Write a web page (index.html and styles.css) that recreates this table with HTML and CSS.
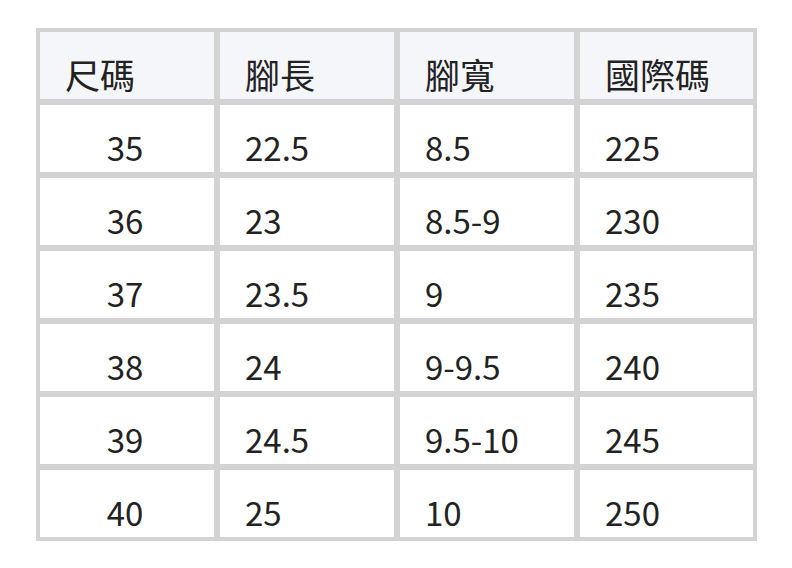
FILE: index.html
```html
<!DOCTYPE html>
<html lang="zh-Hant">
<head>
<meta charset="utf-8">
<link rel="stylesheet" href="styles.css">
</head>
<body>
<div class="size-table">
  <div class="cell head first">尺碼</div>
  <div class="cell head">腳長</div>
  <div class="cell head">腳寬</div>
  <div class="cell head">國際碼</div>

  <div class="cell first">35</div><div class="cell">22.5</div><div class="cell">8.5</div><div class="cell">225</div>
  <div class="cell first">36</div><div class="cell">23</div><div class="cell">8.5-9</div><div class="cell">230</div>
  <div class="cell first">37</div><div class="cell">23.5</div><div class="cell">9</div><div class="cell">235</div>
  <div class="cell first">38</div><div class="cell">24</div><div class="cell">9-9.5</div><div class="cell">240</div>
  <div class="cell first">39</div><div class="cell">24.5</div><div class="cell">9.5-10</div><div class="cell">245</div>
  <div class="cell first">40</div><div class="cell">25</div><div class="cell">10</div><div class="cell">250</div>
</div>
</body>
</html>
```
FILE: styles.css
```css
html, body {
  margin: 0;
  padding: 0;
  background: #ffffff;
}
body {
  padding: 28px 0 0 36px;
  font-family: "Noto Sans CJK TC", "Noto Sans CJK SC", sans-serif;
  font-weight: 400;
  color: #222222;
}
.size-table {
  width: 721px;
  box-sizing: border-box;
  display: grid;
  grid-template-columns: 174px 174px 174px 173px;
  grid-auto-rows: 67px;
  gap: 6px;
  padding: 4px;
  background: #d3d3d3;
}
.cell {
  background: #ffffff;
  font-size: 33px;
  line-height: 46px;
  padding: 0 10px 2px 25px;
  display: flex;
  align-items: flex-end;
}
.cell.head {
  background: #f5f6fa;
  font-size: 35px;
  padding-bottom: 2px;
}
.cell.first:not(.head) {
  justify-content: center;
  padding: 0 4px 2px 0;
}
```
